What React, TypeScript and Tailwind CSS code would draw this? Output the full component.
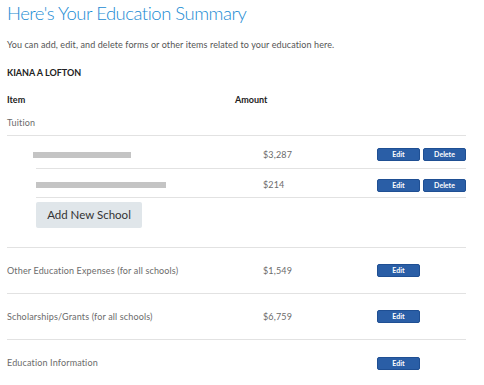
import React from "react";

const font = { fontFamily: "Lato, 'Open Sans', Arial, sans-serif" };

function Btn({ label }: { label: string }) {
  return (
    <button className="w-[43px] h-[13px] rounded-[2px] bg-[#2a5ea6] border border-[#1f4f93] text-white text-[7px] font-bold leading-none flex items-center justify-center">
      {label}
    </button>
  );
}

function SchoolRow({ bar, amount, first }: { bar: string; amount: string; first?: boolean }) {
  return (
    <div className={`flex items-center border-b border-[#e2e2e2] ${first ? "h-[33px] pt-[5px]" : "h-[29px] pt-[4px]"}`}>
      <div className={first ? "w-[227px] -ml-[3px]" : "w-[227px]"}>
        <div className={`${bar} h-[6px] bg-[#c4c4c4]`} />
      </div>
      <div className={`text-[9px] tracking-[0.15px] text-[#6b6b6b] ${first ? "ml-[3px]" : ""}`}>{amount}</div>
      <div className="ml-auto flex gap-[3px]">
        <Btn label="Edit" />
        <Btn label="Delete" />
      </div>
    </div>
  );
}

function SummaryRow({ label, amount }: { label: string; amount?: string }) {
  return (
    <div className="flex items-center h-[46px] border-b border-[#e2e2e2] last:border-b-0">
      <div className="w-[256px] text-[9px] tracking-[0.15px] text-[#6b6b6b]">{label}</div>
      <div className="w-[114px] text-[9px] tracking-[0.15px] text-[#6b6b6b]">{amount}</div>
      <Btn label="Edit" />
    </div>
  );
}

export default function App() {
  return (
    <div className="w-[484px] h-[385px] bg-white overflow-hidden pl-[7px] pr-[18px]" style={font}>
      <h1 className="text-[18.5px] font-light text-[#1a8bd3] leading-[24px] pt-[1px] tracking-[-0.5px]">
        Here's Your Education Summary
      </h1>
      <p className="mt-[15px] text-[9px] tracking-[0.1px] text-[#555] leading-[10px]">
        You can add, edit, and delete forms or other items related to your education here.
      </p>
      <div className="mt-[18px] text-[9px] font-bold text-[#222] leading-[10px]">KIANA A LOFTON</div>
      <div className="mt-[17px] flex text-[9px] font-bold text-[#222] leading-[10px]">
        <div className="w-[228px]">Item</div>
        <div>Amount</div>
      </div>
      <div className="mt-[13px] text-[9px] tracking-[0.15px] text-[#6b6b6b] leading-[10px] pb-[7px] border-b border-[#e2e2e2]">
        Tuition
      </div>
      <div className="pl-[29px]">
        <SchoolRow bar="w-[98px]" amount="$3,287" first />
        <SchoolRow bar="w-[130px]" amount="$214" />
        <div className="h-[49px] pt-[4px]">
          <button className="w-[106px] h-[26px] rounded-[2px] bg-[#e0e6ea] text-[11.5px] text-[#333] flex items-center justify-center">
            Add New School
          </button>
        </div>
      </div>
      <div className="border-t border-[#e2e2e2]">
        <SummaryRow label="Other Education Expenses (for all schools)" amount="$1,549" />
        <SummaryRow label="Scholarships/Grants (for all schools)" amount="$6,759" />
        <SummaryRow label="Education Information" />
      </div>
    </div>
  );
}
